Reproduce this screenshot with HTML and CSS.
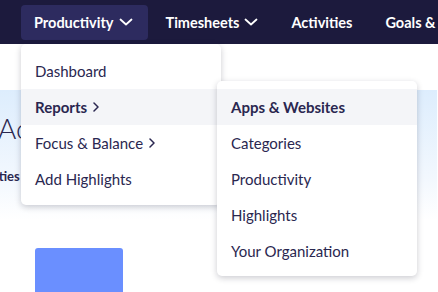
FILE: index.html
```html
<!DOCTYPE html>
<html>
<head>
<meta charset="utf-8">
<link rel="stylesheet" href="styles.css">
</head>
<body>
<nav class="nav">
  <div class="nav-item active">Productivity <svg class="chev" viewBox="0 0 14 8"><path d="M1.5 1.5 L7 6.5 L12.5 1.5"/></svg></div>
  <div class="nav-item">Timesheets <svg class="chev" viewBox="0 0 14 8"><path d="M1.5 1.5 L7 6.5 L12.5 1.5"/></svg></div>
  <div class="nav-item">Activities</div>
  <div class="nav-item">Goals &amp; Insights</div>
</nav>
<main class="main">
  <section class="panel">
    <h1 class="title">Activities</h1>
    <div class="tabs"><span class="tab">Activities</span></div>
  </section>
  <section class="chart">
    <div class="bar" style="height:44px"></div>
  </section>
  <div class="axis"></div>
</main>

<div class="menu menu-main">
  <div class="menu-item">Dashboard</div>
  <div class="menu-item hl strong">Reports <svg class="sub" viewBox="0 0 6 10"><path d="M1 1 L5 5 L1 9"/></svg></div>
  <div class="menu-item">Focus &amp; Balance <svg class="sub" viewBox="0 0 6 10"><path d="M1 1 L5 5 L1 9"/></svg></div>
  <div class="menu-item">Add Highlights</div>
</div>
<div class="menu menu-sub">
  <div class="menu-item hl strong">Apps &amp; Websites</div>
  <div class="menu-item">Categories</div>
  <div class="menu-item">Productivity</div>
  <div class="menu-item">Highlights</div>
  <div class="menu-item">Your Organization</div>
</div>
</body>
</html>
```

FILE: styles.css
```css
* { box-sizing: border-box; }
html, body { margin: 0; padding: 0; }
body {
  width: 438px;
  height: 292px;
  overflow: hidden;
  position: relative;
  background: #fff;
  font-family: Lato, "Noto Sans", sans-serif;
  color: #2a2750;
}
.nav {
  height: 44px;
  background: #1c1a3d;
  display: flex;
  align-items: center;
  padding-left: 21px;
  gap: 5px;
  white-space: nowrap;
  overflow: hidden;
}
.nav-item {
  height: 35px;
  display: flex;
  align-items: center;
  padding: 0 15px 0 13px;
  border-radius: 4px;
  color: #fff;
  font-size: 14.5px;
  font-weight: 700;
  flex-shrink: 0;
}
.nav-item.active { background: #2d2b5f; }
.chev {
  width: 14px;
  height: 8px;
  margin-left: 5px;
  fill: none;
  stroke: #fff;
  stroke-width: 1.8;
  stroke-linecap: round;
  stroke-linejoin: round;
}
.main { position: relative; }
.panel {
  margin-top: 46px;
  width: 437px;
  height: 130px;
  background: linear-gradient(to bottom, #ddedfd 0%, #f3f8fe 70%, #ffffff 100%);
  padding-top: 22px;
  overflow: hidden;
}
.title {
  margin: 0 0 0 -2px;
  font-size: 28px;
  font-weight: 300;
  line-height: 32px;
  color: #2a2750;
}
.tabs {
  margin-top: 21px;
  margin-left: -35px;
}
.tab {
  font-size: 13px;
  font-weight: 700;
  color: #2a2750;
}
.chart {
  height: 72px;
  display: flex;
  align-items: flex-end;
  padding-left: 35px;
}
.bar {
  width: 88px;
  background: #6a8fff;
  border-radius: 3px 3px 0 0;
}
.axis {
  margin-left: 15px;
  height: 2px;
  background: repeating-linear-gradient(90deg, #c3c3cc 0 1px, transparent 1px 2px);
}
.menu {
  position: absolute;
  width: 200px;
  background: #fff;
  border-radius: 5px;
  box-shadow: 0 2px 6px rgba(20, 20, 40, 0.22);
}
.menu-main { left: 21px; top: 44px; padding: 9px 0 8px; }
.menu-sub { left: 217px; top: 81px; padding: 8px 0 7px; }
.menu-item {
  height: 36px;
  display: flex;
  align-items: center;
  padding-left: 14px;
  font-size: 15px;
  color: #2a2750;
  white-space: nowrap;
}
.menu-item.hl { background: #f4f5f8; }
.menu-item.strong { font-weight: 700; }
.sub {
  width: 6px;
  height: 10px;
  margin-left: 6px;
  fill: none;
  stroke: #2a2750;
  stroke-width: 1.5;
  stroke-linecap: round;
  stroke-linejoin: round;
}
```
